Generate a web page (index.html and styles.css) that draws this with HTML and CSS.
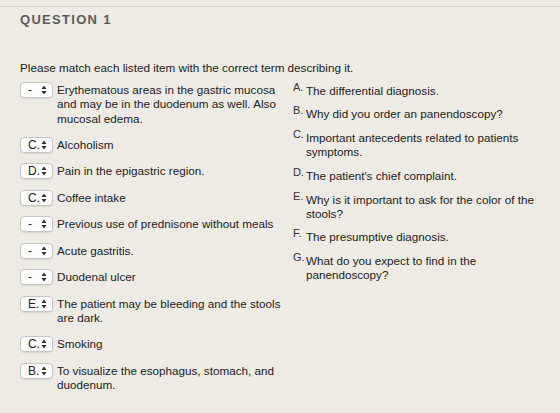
FILE: index.html
```html
<!DOCTYPE html>
<html lang="en">

<head>
  <meta charset="UTF-8" />
  <title>Question 1</title>
  <link rel="stylesheet" href="styles.css">
</head>

<body>

  <div class="question">
    <h2>QUESTION 1</h2>
    <p class="intro">Please match each listed item with the correct term describing it.</p>

    <div class="match">
      <!-- Itens -->
      <ul class="items">
        <li><span class="pick">-<svg viewBox="0 0 6 10"><path d="M0.5 4 3 0.5 5.5 4Z M0.5 6 3 9.5 5.5 6Z"/></svg></span><span>Erythematous areas in the gastric mucosa and may be in the duodenum as well. Also mucosal edema.</span></li>
        <li><span class="pick">C.<svg viewBox="0 0 6 10"><path d="M0.5 4 3 0.5 5.5 4Z M0.5 6 3 9.5 5.5 6Z"/></svg></span><span>Alcoholism</span></li>
        <li><span class="pick">D.<svg viewBox="0 0 6 10"><path d="M0.5 4 3 0.5 5.5 4Z M0.5 6 3 9.5 5.5 6Z"/></svg></span><span>Pain in the epigastric region.</span></li>
        <li><span class="pick">C.<svg viewBox="0 0 6 10"><path d="M0.5 4 3 0.5 5.5 4Z M0.5 6 3 9.5 5.5 6Z"/></svg></span><span>Coffee intake</span></li>
        <li><span class="pick">-<svg viewBox="0 0 6 10"><path d="M0.5 4 3 0.5 5.5 4Z M0.5 6 3 9.5 5.5 6Z"/></svg></span><span>Previous use of prednisone without meals</span></li>
        <li><span class="pick">-<svg viewBox="0 0 6 10"><path d="M0.5 4 3 0.5 5.5 4Z M0.5 6 3 9.5 5.5 6Z"/></svg></span><span>Acute gastritis.</span></li>
        <li><span class="pick">-<svg viewBox="0 0 6 10"><path d="M0.5 4 3 0.5 5.5 4Z M0.5 6 3 9.5 5.5 6Z"/></svg></span><span>Duodenal ulcer</span></li>
        <li><span class="pick">E.<svg viewBox="0 0 6 10"><path d="M0.5 4 3 0.5 5.5 4Z M0.5 6 3 9.5 5.5 6Z"/></svg></span><span>The patient may be bleeding and the stools are dark.</span></li>
        <li><span class="pick">C.<svg viewBox="0 0 6 10"><path d="M0.5 4 3 0.5 5.5 4Z M0.5 6 3 9.5 5.5 6Z"/></svg></span><span>Smoking</span></li>
        <li><span class="pick">B.<svg viewBox="0 0 6 10"><path d="M0.5 4 3 0.5 5.5 4Z M0.5 6 3 9.5 5.5 6Z"/></svg></span><span>To visualize the esophagus, stomach, and duodenum.</span></li>
      </ul>

      <!-- Termos -->
      <ol class="terms">
        <li><span class="letter">A.</span><span>The differential diagnosis.</span></li>
        <li><span class="letter">B.</span><span>Why did you order an panendoscopy?</span></li>
        <li><span class="letter">C.</span><span>Important antecedents related to patients symptoms.</span></li>
        <li><span class="letter">D.</span><span>The patient's chief complaint.</span></li>
        <li><span class="letter">E.</span><span>Why is it important to ask for the color of the stools?</span></li>
        <li><span class="letter">F.</span><span>The presumptive diagnosis.</span></li>
        <li><span class="letter">G.</span><span>What do you expect to find in the panendoscopy?</span></li>
      </ol>
    </div>
  </div>

</body>

</html>
```

FILE: styles.css
```css
* {
  margin: 0;
  padding: 0;
  box-sizing: border-box;
}

html,
body {
  background-color: #eeebe4;
  font-family: 'Liberation Sans', Arial, sans-serif;
  color: #222;
  font-size: 11.7px;
  line-height: 14.5px;
}

.question {
  margin-top: 6px;
  border-top: 1px solid #d2d1cc;
  padding: 0 20px;
}

h2 {
  margin-top: 5px;
  font-size: 13px;
  line-height: 16px;
  font-weight: 700;
  letter-spacing: 1.3px;
  color: #5c5c5c;
}

.intro {
  margin-top: 33px;
  color: #222;
}

.match {
  display: flex;
  gap: 11px;
  margin-top: 6px;
}

.items {
  list-style: none;
  width: 265px;
}

.items li {
  display: flex;
  align-items: baseline;
  margin-bottom: 10.5px;
}

.pick {
  flex: none;
  position: relative;
  display: inline-block;
  width: 33px;
  height: 16px;
  margin-right: 4px;
  padding: 0 0 0 7px;
  background-color: #fcfcfc;
  border: 1px solid #c6c6c6;
  border-radius: 4px;
  box-shadow: 0 1px 1px rgba(0, 0, 0, 0.08);
  font-size: 12px;
  line-height: 14px;
  color: #222;
}

.pick svg {
  position: absolute;
  right: 5px;
  top: 2px;
  width: 6px;
  height: 10px;
  fill: #333;
}

.terms {
  list-style: none;
  width: 250px;
  padding-top: 2px;
  line-height: 14px;
}

.terms li {
  display: flex;
  align-items: flex-start;
  margin-bottom: 9.8px;
}

.letter {
  flex: none;
  width: 13px;
  font-size: 11px;
  line-height: 11px;
  margin-top: -2px;
  color: #333;
}
```
